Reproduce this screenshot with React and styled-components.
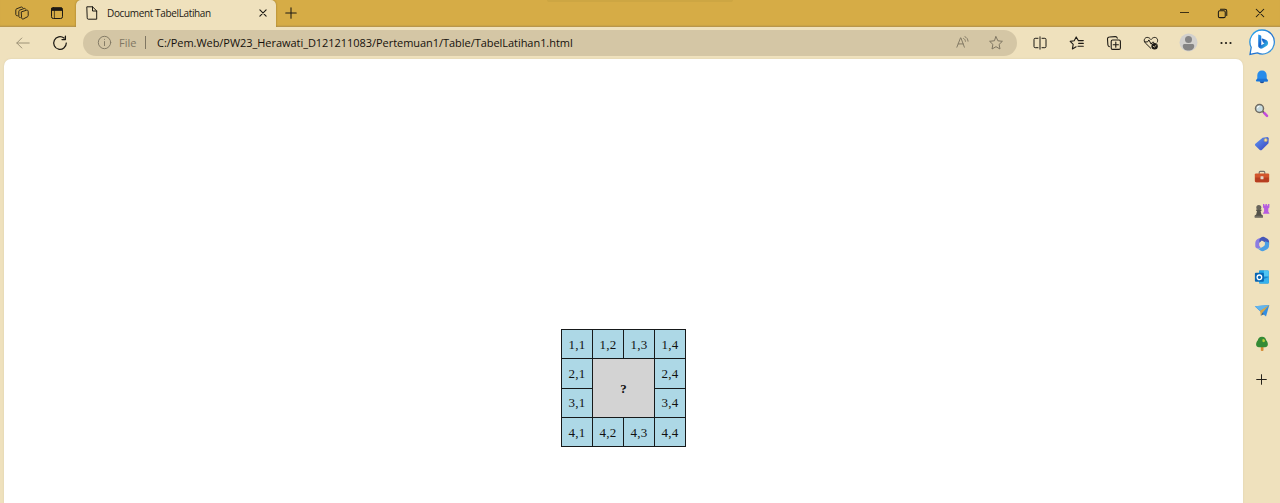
import React from "react";
import styled, { createGlobalStyle } from "styled-components";

const Global = createGlobalStyle`
  * { box-sizing: border-box; }
  html, body { margin: 0; height: 100%; overflow: hidden; }
  body { background: #efe1bd; font-family: "Open Sans", "Noto Sans", sans-serif; color: #1d1a14; }
`;

const Browser = styled.div`
  display: flex;
  flex-direction: column;
  height: 503px;
  width: 1280px;
  background: #efe1bd;
`;

const TitleBar = styled.header`
  display: flex;
  height: 27px;
  background: #d6ac46;
  box-shadow: inset 0 -1px 0 #b9964b, inset 0 -2px 1px #caa345;
`;

const Slot = styled.span`
  display: flex;
  flex: none;
  align-items: center;
  justify-content: center;
  width: ${(p) => p.$w}px;
  height: ${(p) => p.$h || 26}px;
  svg { display: block; overflow: visible; }
`;

const BingSlot = styled(Slot)`
  margin-left: auto;
`;

const TitleTools = styled.div`
  display: flex;
  width: 76px;
  padding-left: 5px;
`;

const Tab = styled.div`
  display: flex;
  align-items: center;
  width: 200px;
  height: 27px;
  padding-bottom: 1px;
  background: #efe1bd;
  border-radius: 5px 5px 0 0;
  box-shadow: 0 0 2px #8d6d22;
  clip-path: inset(0 -3px 0 -3px);
`;

const TabTitle = styled.span`
  flex: 1;
  font-size: 10px;
  line-height: 26px;
  letter-spacing: -0.36px;
  white-space: nowrap;
`;

const DragHint = styled.div`
  width: 186px;
  height: 2px;
  margin-left: 241px;
  background: #cda643;
  border-radius: 0 0 3px 3px;
`;

const WindowControls = styled.div`
  display: flex;
  margin-left: auto;
  padding-right: 1px;
`;

const Toolbar = styled.nav`
  display: flex;
  align-items: center;
  height: 32px;
  padding: 0 0 1px 5px;
`;

const Address = styled.div`
  display: flex;
  flex: none;
  align-items: center;
  width: 934px;
  height: 26px;
  margin-left: 4px;
  padding-left: 12px;
  border-radius: 13px;
  background: #d4c6a5;
  font-size: 11px;
  white-space: nowrap;
`;

const Scheme = styled.span`
  width: 27px;
  margin-left: 5px;
  margin-right: -1px;
  color: #7f7662;
`;

const Divider = styled.span`
  width: 1px;
  height: 13px;
  background: #7f7662;
`;

const Url = styled.span`
  flex: 1;
  margin-left: 11px;
  letter-spacing: -0.045px;
  color: #14110c;
`;

const Body = styled.div`
  display: flex;
  flex: 1;
  padding-left: 4px;
`;

const Page = styled.main`
  display: flex;
  align-items: flex-start;
  justify-content: center;
  width: 1239px;
  padding-top: 270px;
  background: #fff;
  border-radius: 7px 7px 0 0;
  box-shadow: 0 0 2px #d9ccab;
`;

const Table = styled.table`
  width: 125px;
  height: 118px;
  border-collapse: collapse;
  table-layout: fixed;
  font-family: "Liberation Serif", serif;
  font-size: 13px;
  color: #111;
`;

const Cell = styled.td`
  height: 29px;
  padding: 0.5px 0 0;
  border: 1px solid #16191a;
  background: ${(p) => (p.$center ? "#d3d3d3" : "#add8e6")};
  font-weight: ${(p) => (p.$center ? "bold" : "normal")};
  letter-spacing: ${(p) => (p.$center ? 0 : "0.2px")};
  text-align: center;
  line-height: 15px;
`;

const Sidebar = styled.aside`
  display: flex;
  flex-direction: column;
  width: 37px;
  padding-top: 1.5px;
`;

const Line = ({ s = 16, w = 1, c = "#1d1a14", children }) => (
  <svg width={s} height={s} viewBox="0 0 16 16" fill="none" stroke={c} strokeWidth={w} strokeLinecap="round" strokeLinejoin="round">{children}</svg>
);

const Workspaces = () => (
  <Line w={0.9}>
    <path d="m7.6 6.8 5-1.6c.8-.2 1.6.3 1.6 1.2v4.2c0 .6-.3 1-.8 1.2L9.2 14c-.8.3-1.6-.2-1.6-1z" />
    <path d="M6.2 12.6c-.8 0-1.4-.5-1.4-1.3V6.4c0-.6.3-1 .8-1.2l4.4-1.7c.7-.3 1.5 0 1.7.6" />
    <path d="M3.4 10.8C2.4 10.8 1.8 10.3 1.8 9.5V5c0-.6.3-1 .8-1.2L7 2.1c.7-.3 1.4 0 1.7.5" />
  </Line>
);
const TabActions = () => (
  <Line><rect x="2.5" y="2.8" width="11" height="10.7" rx="1.8" /><path d="M3 3h10v2.3H3z" fill="#1d1a14" /><path d="M5.4 5v8" strokeWidth=".7" /></Line>
);
const File = () => (
  <Line><path d="M3.2 1.8h5.3l4.2 4.1v8.3H4.2a1 1 0 0 1-1-1zM8.5 1.8V6h4.2" /></Line>
);
const Cross = ({ s, w = 1.4 }) => <Line s={s} w={w}><path d="m3 3 10 10M13 3 3 13" /></Line>;
const Plus = ({ s }) => <Line s={s} w={1.4}><path d="M8 1v14M1 8h14" /></Line>;
const Back = () => <Line c="#9d9277"><path d="M14.2 8H1.8m5-5-5 5 5 5" /></Line>;
const Reload = () => <Line w={1.25}><path d="M14.3 8A6.3 6.3 0 1 1 12 3.1M10 4.6h3.4V1" /></Line>;
const Info = () => <Line s={15} c="#7f7662"><circle cx="8" cy="8" r="6.6" /><path d="M8 7v4.3M8 4.6v.1" /></Line>;
const ReadAloud = () => (
  <Line s={15} c="#7f7662"><path d="m2 13 3.9-10h.4L10 13M3.5 9.5h5.2M9.2 3.7c1.2.6 1.8 1.6 1.9 3M10.6 1.8c2 .9 3.2 2.6 3.3 4.8" /></Line>
);
const Star = () => (
  <Line c="#7f7662"><path d="m8 1.7 1.9 4.1 4.5.5-3.3 3.1.9 4.6L8 11.7l-4 2.3.9-4.6L1.6 6.3l4.5-.5z" /></Line>
);
const Split = () => <Line><path d="M6 3.3H3.2a1.2 1.2 0 0 0-1.2 1.2v7a1.2 1.2 0 0 0 1.2 1.2H6M10 3.3h2.8A1.2 1.2 0 0 1 14 4.5v7a1.2 1.2 0 0 1-1.2 1.2H10M8 1.8v12.4" /></Line>;
const Favorites = () => <Line w={1.1}><path d="M9.3 5.6 7.2 1.9 5.2 5.8l-4 .6 3 3-.8 4.5 3.7-2.1M9.3 5.6h5M9.7 8.4h4.6M9 11.2h5.3" /></Line>;
const Collections = () => <Line w={1.1}><rect x="5.2" y="5" width="9.2" height="9.4" rx="1.4" /><path d="M9.8 7v5.3M7.2 9.7h5.2M3.3 11.6A2 2 0 0 1 1.9 10L1.5 4.2A2 2 0 0 1 3.4 2l5.9-.4a2 2 0 0 1 2 1.5" /></Line>;
const Essentials = () => (
  <Line><path d="M7.8 13.3 2.2 7.8C.2 5.6 1.5 2.5 4.2 2.4 6 2.4 7 3.5 8 4.6c1-1.1 2-2.2 3.8-2.2 2.3.1 3.6 2.7 2.5 4.7M2 6.9h2.6l1.3-2 2.2 4.2 1.2-1.8h1.5" /><circle cx="11.6" cy="11.2" r="3.2" fill="#1d1a14" stroke="none" /><path d="m10.2 11.2 1 1 1.9-1.9" stroke="#efe1bd" strokeWidth=".8" /></Line>
);
const Profile = () => (
  <svg width="19" height="19" viewBox="0 0 19 19"><circle cx="9.5" cy="9.5" r="9" fill="#d2d0cd" /><circle cx="9.5" cy="6.4" r="3.5" fill="#858484" /><path d="M3.8 12.9c0-1.3.8-1.9 2-1.9h7.4c1.2 0 2 .6 2 1.9 0 3.1-2.6 4.6-5.7 4.6s-5.7-1.5-5.7-4.6z" fill="#858484" /></svg>
);
const More = () => <svg width="14" height="4" viewBox="0 0 14 4" fill="#1d1a14"><circle cx="2.5" cy="2" r="1.1" /><circle cx="7" cy="2" r="1.1" /><circle cx="11.5" cy="2" r="1.1" /></svg>;
const Bing = () => (
  <svg width="26" height="27" viewBox="0 0 26 27">
    <defs>
      <linearGradient id="bubble" x2="1" y2="1"><stop stopColor="#2aaef0" /><stop offset=".55" stopColor="#2170cf" /><stop offset="1" stopColor="#45ace8" /></linearGradient>
      <linearGradient id="bing" x2="1" y2="1"><stop stopColor="#2ba5f1" /><stop offset=".45" stopColor="#1762ca" /><stop offset="1" stopColor="#3bd5ee" /></linearGradient>
    </defs>
    <path d="M13.3 1a12 12 0 1 1-5 22.9L1 25.5l1.2-7.2A12 12 0 0 1 13.3 1z" fill="#fff" stroke="url(#bubble)" strokeWidth="1.3" />
    <path d="M9.4 5.4 11.5 6.2c.6.2.8.6.8 1.2v8.8l3.2-1.9-1.5-.8-1.3-3.3c-.2-.6.2-.9.8-.7l3.2 1.2c1.4.5 2.4 1.6 2.4 3.3 0 1.4-.6 2.3-1.7 3l-3.7 2.2c-1.2.7-2.2.6-3.2-.1-.9-.6-1.3-1.3-1.3-2.3V5.7z" fill="url(#bing)" />
  </svg>
);
const Minimize = () => <svg width="9" height="2"><path d="M0 .5h9" stroke="#3c3015" /></svg>;
const Restore = () => <Line s={11} w={1.5}><rect x="2" y="4" width="10" height="10" rx="2" /><path d="M5 1.8h6.5A2.7 2.7 0 0 1 14.2 4.5V11" /></Line>;

const Art = ({ children }) => <svg width="16" height="16" viewBox="0 0 16 16">{children}</svg>;
const Bell = () => <Art><path d="M5.7 12h4.6a2.3 2.3 0 0 1-4.6 0z" fill="#204e98" /><path d="M8 1.4c3 0 4.7 2.1 4.7 4.8v3.4l1.2 1.5c.4.7.1 1.3-.6 1.3H2.7c-.7 0-1-.6-.6-1.3l1.2-1.5V6.2C3.3 3.5 5 1.4 8 1.4z" fill="#278bea" /><path d="M2 12.1 3.3 9.7h9.4l1.2 1.8-.5.9z" fill="#1d72d4" /></Art>;
const Search = () => <Art><path d="m8.6 8.4 1.8 1.8" stroke="#5a554d" strokeWidth="1.8" /><path d="m10.4 10.2 2.6 2.6" stroke="#c44bdb" strokeWidth="2.6" strokeLinecap="round" /><circle cx="5.5" cy="5.5" r="4" fill="#c7dadd" stroke="#706b62" strokeWidth="1.5" /><path d="M3.4 5.2a2.2 2.2 0 0 1 2-2" stroke="#fff" fill="none" /></Art>;
const Tag = () => <Art><defs><linearGradient id="tag" x2="1" y2="1"><stop stopColor="#629af4" /><stop offset="1" stopColor="#3741bd" /></linearGradient></defs><path d="M8.6 1.8 13.5 1l1.3 1.1-.3 5.2-6.7 6.6c-.6.6-1.4.6-2 0L1.4 9.7c-.6-.6-.6-1.3 0-2z" fill="url(#tag)" /><circle cx="11.7" cy="4.1" r="1.5" fill="#f0dda9" stroke="#d3b15e" strokeWidth=".7" /></Art>;
const Tools = () => <Art><path d="M5.2 5V3.4c0-.6.4-1 1-1h3.6c.6 0 1 .4 1 1V5" fill="none" stroke="#787169" strokeWidth="1.1" /><rect x=".8" y="4.4" width="14.4" height="8.8" rx="1.2" fill="#d2552c" /><path d="M1.2 8.6h13.6V12c0 .8-.5 1.2-1.2 1.2H2.4c-.7 0-1.2-.4-1.2-1.2z" fill="#b63e20" /><rect x="6.5" y="7.2" width="3" height="3" rx=".5" fill="#e5d8c9" /></Art>;
const Games = () => <Art><path d="M9 1h1.4v1.5h1V1h1.5v1.5h1V1h1.5v3.4l-1.1 1v3l1.3 2.3H8.8l1.3-2.3v-3L9 4.4z" fill="#b65be0" /><circle cx="4.8" cy="4.5" r="2.5" fill="#68645c" /><path d="M2.2 6.5h5.2v1.4H6.6l.8 3.5 1.4 1v2H.8v-2l1.4-1L3 7.9h-.8z" fill="#545249" /><path d="M.7 12.7h8.2v1.8H.7z" fill="#716d63" /></Art>;
const Office = () => (
  <Art>
    <path d="M9 .9 4.6 2.6C2.6 3.6 1.4 5 1.3 7v3.4c.5 1.6 1.9 2.5 3.5 2.1l2-.8-1.5-2V7c0-2 1-2.8 3.2-3.6z" fill="#8b7de2" />
    <path d="M8.2 1.1c1.1-.4 2-.3 2.9.3l2.3 1.4c1.3.9 1.7 2 1.7 3.3v2.6L10.5 6 7.8 4.6 5.3 7V4.4C5.5 2.7 6.7 1.6 8.2 1.1z" fill="#4657b8" />
    <path d="M15 6.5v3.6c0 1.4-.7 2.4-1.9 3.1l-2.5 1.4c-1.4.8-3 .7-4.2-.1l-2.8-2c1.2.2 2.2-.1 3.1-.6l3-1.7c.8-.5 1.2-1.2 1.2-2.2V5.2l1.8.5z" fill="#4b9fe4" />
    <path d="m8 5.5 2.4 1.3v2.5L8 10.7 5.6 9.3V6.8z" fill="#efe1bd" />
  </Art>
);
const Outlook = () => <Art><rect x="5" y="1.4" width="9.8" height="13" rx="1" fill="#1688ce" /><path d="M5 2.4c0-.6.4-1 1-1h4v6H5z" fill="#22a6e8" /><path d="M10 1.4h3.8c.6 0 1 .4 1 1v5H10z" fill="#50c5f4" /><path d="m5 12 9.8-4v5.4c0 .6-.4 1-1 1H6c-.6 0-1-.4-1-1z" fill="#36b2ee" /><rect x=".9" y="3.8" width="9" height="9" rx="1" fill="#0967b4" /><circle cx="5.4" cy="8.3" r="2.3" fill="none" stroke="#fff" strokeWidth="1.3" /></Art>;
const Drop = () => <Art><path d="M.8 3.3 15.3 2 12 13.6 7.9 10z" fill="#338ee1" /><path d="m.8 3.3 14.5-1.3-8.6 6z" fill="#62b5ed" /><path d="m15.3 2-9.2 5.8.6 5 1.7-3z" fill="#d8a545" /><path d="m6.7 12.8 1.7-3 1.7 1.5z" fill="#38638e" /></Art>;
const Tree = () => <Art><path d="M6.8 10h2.7v4.2c0 1-2.7 1-2.7 0z" fill="#d58b35" /><path d="M8 .8c2.5 0 3.9 1.7 4.2 3.5 2.5 2.7 2.3 7-1.2 7H5c-3.5 0-3.7-4.3-1.2-7C4.1 2.5 5.5.8 8 .8z" fill="#348b35" /><path d="M8.4 3.6 9.7 3l1.2.9v1.5l-1.3.8-1.2-.8z" fill="#b6cd38" /></Art>;

const sidebarIcons = [Bell, Search, Tag, Tools, Games, Office, Outlook, Drop, Tree];

export default function App() {
  return (
    <Browser>
      <Global />
      <TitleBar>
        <TitleTools><Slot $w={34}><Workspaces /></Slot><Slot $w={36}><TabActions /></Slot></TitleTools>
        <Tab>
          <Slot $w={31}><File /></Slot>
          <TabTitle>Document TabelLatihan</TabTitle>
          <Slot $w={27}><Cross s={10} w={1.8} /></Slot>
        </Tab>
        <Slot $w={30}><Plus s={12} /></Slot>
        <DragHint />
        <WindowControls>
          <Slot $w={38}><Minimize /></Slot><Slot $w={38}><Restore /></Slot><Slot $w={38}><Cross s={12} /></Slot>
        </WindowControls>
      </TitleBar>
      <Toolbar>
        <Slot $w={36}><Back /></Slot><Slot $w={38}><Reload /></Slot>
        <Address>
          <Slot $w={19}><Info /></Slot>
          <Scheme>File</Scheme><Divider />
          <Url>C:/Pem.Web/PW23_Herawati_D121211083/Pertemuan1/Table/TabelLatihan1.html</Url>
          <Slot $w={33}><ReadAloud /></Slot><Slot $w={33}><Star /></Slot><Slot $w={5} />
        </Address>
        <Slot $w={46}><Split /></Slot>
        <Slot $w={28}><Favorites /></Slot>
        <Slot $w={46}><Collections /></Slot>
        <Slot $w={28}><Essentials /></Slot>
        <Slot $w={47}><Profile /></Slot>
        <Slot $w={28}><More /></Slot>
        <BingSlot $w={36}><Bing /></BingSlot>
      </Toolbar>
      <Body>
        <Page>
          <Table>
            <tbody>
              <tr><Cell>1,1</Cell><Cell>1,2</Cell><Cell>1,3</Cell><Cell>1,4</Cell></tr>
              <tr><Cell>2,1</Cell><Cell $center colSpan={2} rowSpan={2}>?</Cell><Cell>2,4</Cell></tr>
              <tr><Cell>3,1</Cell><Cell>3,4</Cell></tr>
              <tr><Cell>4,1</Cell><Cell>4,2</Cell><Cell>4,3</Cell><Cell>4,4</Cell></tr>
            </tbody>
          </Table>
        </Page>
        <Sidebar>
          {sidebarIcons.map((Icon, i) => <Slot key={i} $w={37} $h={33.35}><Icon /></Slot>)}
          <Slot $w={37} $h={37}><Plus s={11} /></Slot>
        </Sidebar>
      </Body>
    </Browser>
  );
}
